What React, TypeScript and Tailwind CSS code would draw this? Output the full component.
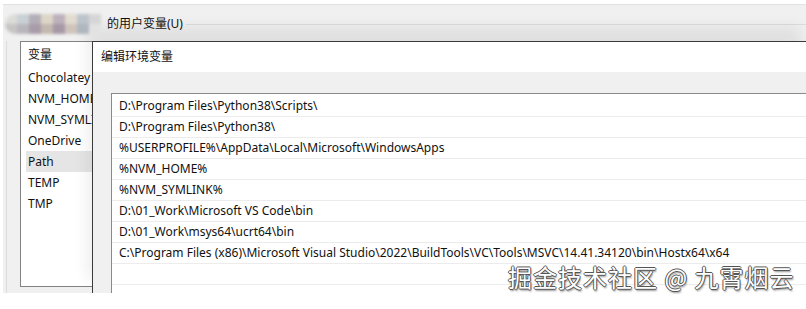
const userVars = ["Chocolatey", "NVM_HOME", "NVM_SYMLINK", "OneDrive", "Path", "TEMP", "TMP"];

const pathEntries = [
  "D:\\Program Files\\Python38\\Scripts\\",
  "D:\\Program Files\\Python38\\",
  "%USERPROFILE%\\AppData\\Local\\Microsoft\\WindowsApps",
  "%NVM_HOME%",
  "%NVM_SYMLINK%",
  "D:\\01_Work\\Microsoft VS Code\\bin",
  "D:\\01_Work\\msys64\\ucrt64\\bin",
  "C:\\Program Files (x86)\\Microsoft Visual Studio\\2022\\BuildTools\\VC\\Tools\\MSVC\\14.41.34120\\bin\\Hostx64\\x64",
  "",
];

// pixelated user name, blurred out in the screenshot
const mosaic = [
  ["#dcdcd8", "#c9d1d6", "#b4aeb8", "#ddd6c8", "#bdb1bc", "#e2dbcf", "#bcc4cb", "#d6d6d6"],
  ["#c8c4c4", "#b8b6bc", "#a89ca8", "#c4b8b0", "#a698a6", "#cfc4bc", "#b0b6be", "#e2e2e2"],
];

export default function App() {
  return (
    <div className="relative w-[806px] h-[309px] overflow-hidden bg-white text-[12px] text-[#111] font-['Noto_Sans','Noto_Sans_CJK_SC',sans-serif]">
      <div className="ml-[3px] mt-[4px] h-[289px] bg-[#f0f0f0] border-t border-[#e2e2e2] flex flex-col">
        {/* group header */}
        <div className="h-[36px] flex items-center">
          <div className="ml-[2px] mt-[2px] flex flex-col blur-[1.5px] rounded-l-[10px] overflow-hidden">
            {mosaic.map((row, i) => (
              <div key={i} className="flex">
                {row.map((c, j) => (
                  <div key={j} className="w-[12px] h-[10px]" style={{ background: c }} />
                ))}
              </div>
            ))}
          </div>
          <span className="ml-[6px] mt-[2px] leading-none">的用户变量(U)</span>
          <div className="flex-1 ml-[3px] mt-[2px] h-px bg-[#dcdcdc]" />
        </div>

        <div className="flex flex-1">
          {/* user variable list behind the dialog */}
          <div className="w-[86px] flex border-l border-[#dcdcdc] ml-[3px] pl-[13px] pb-[6px]">
            <div className="flex-1 bg-white border border-r-0 border-[#828282]">
              <div className="h-[25px] pl-[7px] flex items-center">变量</div>
              {userVars.map((v) => (
                <div
                  key={v}
                  className={
                    "h-[21px] ml-[5px] pl-[2px] flex items-center whitespace-nowrap overflow-hidden " +
                    (v === "Path" ? "bg-[#e5e5e5]" : "")
                  }
                >
                  {v}
                </div>
              ))}
            </div>
          </div>

          {/* edit environment variable dialog */}
          <div className="flex-1 flex flex-col border-t border-l border-[#3a3a3a] shadow-[-5px_-14px_14px_rgba(0,0,0,0.07)]">
            <div className="h-[30px] bg-white pl-[8px] flex items-center">编辑环境变量</div>
            <div className="flex-1 pl-[18px] pt-[21px] bg-[#f0f0f0]">
              <div className="h-full bg-white border-t border-l border-[#8a8a8a] pt-[2px]">
                {pathEntries.map((p, i) => (
                  <div
                    key={i}
                    className="h-[21px] pl-[7px] flex items-center border-b border-[#ececec] whitespace-nowrap"
                  >
                    {p}
                  </div>
                ))}
              </div>
            </div>
          </div>
        </div>
      </div>

      {/* watermark */}
      <div className="absolute left-[508px] top-[262px] text-[24px] leading-[30px] text-white tracking-[1px] whitespace-nowrap font-['Noto_Sans_CJK_SC',sans-serif] [text-shadow:1px_0_0_#555,-1px_0_0_#555,0_1px_0_#555,0_-1px_0_#555,1px_2px_2px_rgba(0,0,0,0.45)]">
        掘金技术社区 @ 九霄烟云
      </div>
    </div>
  );
}
